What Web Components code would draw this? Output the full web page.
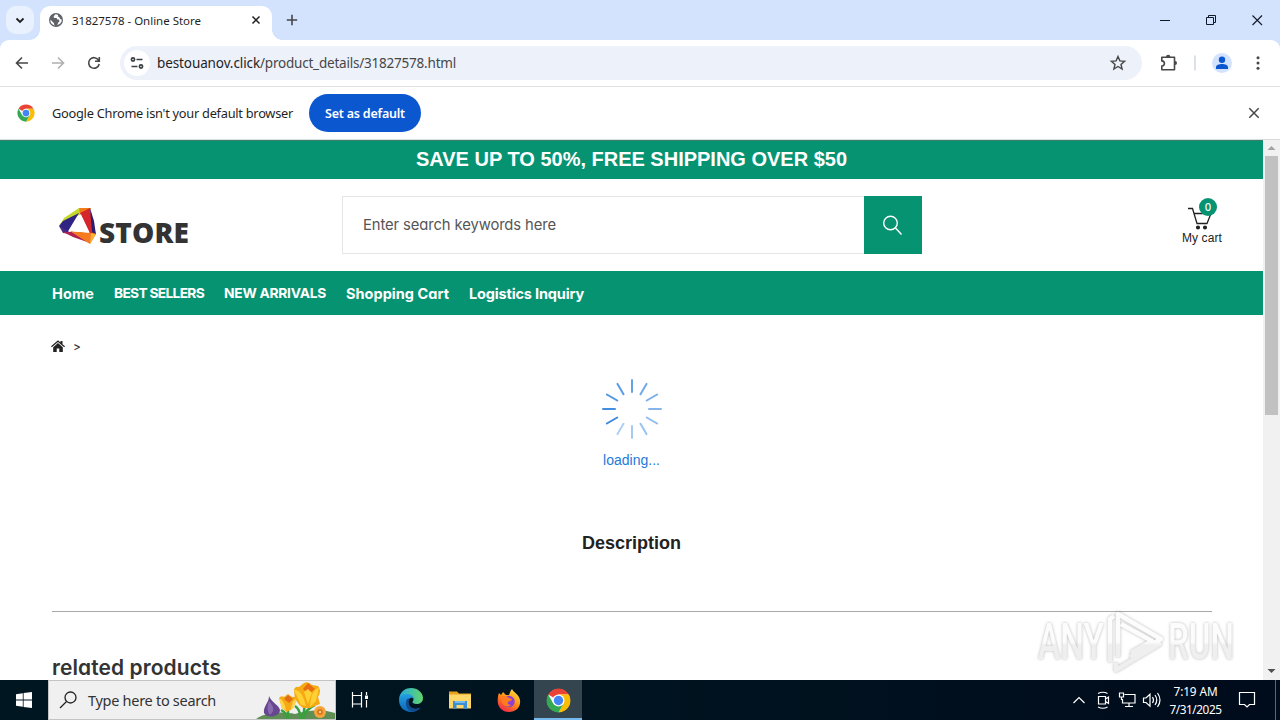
<!DOCTYPE html>
<html lang="en">
<head>
<meta charset="utf-8">
<title>31827578 - Online Store</title>
<style>
    body{
        margin: 0;
        width: 1280px;
        height: 720px;
        overflow: hidden;
        display: flex;
        flex-direction: column;
        background: #fff;
        font-family: "Noto Sans", "Open Sans", sans-serif;
    }
    main{
        display: flex;
        height: 541px;
        overflow: hidden;
    }
</style>
</head>
<body>
    <chrome-tabs><ui-text w="129">31827578 - Online Store</ui-text></chrome-tabs>
    <chrome-toolbar>
        <ui-text w="103" slot="host">bestouanov.click</ui-text>
        <ui-text w="196" slot="path">/product_details/31827578.html</ui-text>
    </chrome-toolbar>
    <chrome-infobar>
        <ui-text w="241">Google Chrome isn't your default browser</ui-text>
        <ui-text w="80" slot="action">Set as default</ui-text>
    </chrome-infobar>
    <main>
        <store-page></store-page>
        <scroll-bar></scroll-bar>
    </main>
    <win-taskbar></win-taskbar>
    <any-run></any-run>

<script>
    class Base extends HTMLElement {
        constructor(){
            super()
            this.attachShadow({ mode: 'open' }).innerHTML = this.constructor.html
        }
    }

    class ChromeTabs extends Base {
        static html = `
        <style>
            :host{
                display: flex;
                height: 40px;
                background: #d3e3fd;
                font-size: 11.5px;
                color: #1f1f1f;
            }
            svg{ display: block; }
            #search{
                width: 28px;
                height: 28px;
                margin: 6px 6px 0;
                border-radius: 10px;
                background: #e9f1fe;
            }
            #tab{
                display: flex;
                align-items: center;
                position: relative;
                box-sizing: border-box;
                width: 232px;
                height: 34px;
                margin-top: 6px;
                padding: 0 8px;
                padding-bottom: 6px;
                border-radius: 10px 10px 0 0;
                background: #fff;
            }
            #tab::before, #tab::after{
                content: "";
                position: absolute;
                bottom: 0;
                width: 10px;
                height: 10px;
            }
            #tab::before{
                left: -10px;
                background: radial-gradient(circle at 0 0, transparent 9.5px, #fff 10px);
            }
            #tab::after{
                right: -10px;
                background: radial-gradient(circle at 100% 0, transparent 9.5px, #fff 10px);
            }
            #title{ margin-left: 8px; flex: 1; }
            #plus{ margin: 10px 0 0 10px; }
            #space{ flex: 1; }
        </style>
        <div id="search">
            <svg width="28" height="28" fill="none" stroke="#1f1f1f" stroke-width="1.8"><path d="M10.5 12.5l3.5 3.5 3.5-3.5"/></svg>
        </div>
        <div id="tab">
            <svg width="16" height="16" viewBox="0 0 16 16">
                <circle cx="8" cy="8" r="7" fill="#5f6368"/>
                <path fill="#fff" d="M2.3 7.6L6 11.3v1.2l1.2 1.2A6 6 0 0 1 2.3 7.6zM8 2.2c-1.4.2-1.8 1-1.6 1.6l-1 1.2 1 .9h2.2l.8 1.5 1.5.2.6 1.6-1.2 1.2-1.1 2.6c3-.6 4.7-3 4.6-5.2l-1.8-1-.8-1.7-1.4-.5.3-1.6z"/>
            </svg>
            <div id="title"><slot></slot></div>
            <svg width="16" height="16" stroke="#1f1f1f" stroke-width="1.5"><path d="M4.5 4.500l7 7M11.500 4.500l-7 7"/></svg>
        </div>
        <svg id="plus" width="20" height="20" stroke="#444746" stroke-width="1.6"><path d="M10 4.8v10.4M4.8 10h10.4"/></svg>
        <div id="space"></div>
        <svg width="138" height="40" fill="none" stroke="#111827" stroke-width="1">
            <path d="M18 20.5h10"/>
            <path d="M64.500 17.500h7v7h-7zM66.500 17.500v-2h7v7h-2"/>
            <path d="M110.500 15.500l9.500 9.500M120 15.500l-9.500 9.500" stroke-width="1.1"/>
        </svg>`
    }

    class ChromeToolbar extends Base {
        static html = `
        <style>
            :host{
                display: block;
                height: 47px;
                background: #d3e3fd;
                font-size: 13.5px;
            }
            #bar{
                display: flex;
                align-items: center;
                box-sizing: border-box;
                height: 47px;
                border-radius: 9px 9px 0 0;
                border-bottom: 1px solid #dfe1e5;
                background: #fff;
            }
            svg{ display: block; flex: none; }
            #omnibox{
                display: flex;
                align-items: center;
                box-sizing: border-box;
                width: 1022px;
                height: 34px;
                padding: 0 12px 0 4px;
                border-radius: 17px;
                background: #edf1fa;
            }
            #site{
                width: 26px;
                height: 26px;
                margin-right: 7px;
                border-radius: 13px;
                background: #fff;
            }
            [name=host]{ color: #1f1f1f; }
            #path{ flex: 1; color: #474747; }
        </style>
        <div id="bar">
            <svg width="120" height="46" fill="none" stroke="#474747" stroke-width="1.6">
                <path d="M28 23H17M22 17.500L16.500 23l5.500 5.500"/>
                <path stroke="#b0b0b0" d="M52 23h11M58 17.500l5.500 5.500-5.500 5.500"/>
                <path d="M98.600 20.300A5.300 5.300 0 1 0 99.200 24M99.300 17v4.200h-4.300"/>
            </svg>
            <div id="omnibox">
                <div id="site">
                    <svg width="26" height="26" fill="none" stroke="#3c4043" stroke-width="1.7">
                        <circle cx="9" cy="9.500" r="1.600"/><path d="M12.500 9.500h6M7.500 16.500h6"/><circle cx="17" cy="16.500" r="1.600"/>
                    </svg>
                </div>
                <slot name="host"></slot><div id="path"><slot name="path"></slot></div>
                <svg width="24" height="24" fill="none" stroke="#474747" stroke-width="1.4"><path d="M12 5.500l1.900 4.400 4.700.4-3.600 3.100 1.100 4.600-4.100-2.500-4.100 2.500L9 13.400l-3.600-3.100 4.700-.4z"/></svg>
            </div>
            <svg width="138" height="46" fill="none" stroke="#474747" stroke-width="1.6">
                <path stroke-linejoin="round" d="M19.800 17.300h12.700v12.400H19.800v-3.600c3.500-.4 3.500-4.800 0-5.200z"/>
                <path fill="#474747" stroke="none" d="M24 17a2.200 2.200 0 0 1 4.400 0zM33 21a2 2 0 0 1 0 4z"/>
                <path stroke="#d5dae3" d="M53 15.500v15"/>
                <circle cx="80" cy="23" r="10" fill="#d3e3fd" stroke="none"/>
                <path fill="#0b57d0" stroke="none" d="M80 16.500a3.200 3.200 0 1 1 0 6.400 3.200 3.200 0 0 1 0-6.400zM74 29v-1.800c0-2.100 3-3.200 6-3.200s6 1.100 6 3.200V29z"/>
                <g fill="#474747" stroke="none"><circle cx="116" cy="17.700" r="1.500"/><circle cx="116" cy="23" r="1.500"/><circle cx="116" cy="28.300" r="1.500"/></g>
            </svg>
        </div>`
    }

    class ChromeInfobar extends Base {
        static html = `
        <style>
            :host{
                display: flex;
                align-items: center;
                box-sizing: border-box;
                height: 52px;
                padding: 0 18px 0 17px;
                background: #fff;
                font-size: 12.800px;
                color: #1f1f1f;
            }
            #logo{ margin-right: 17px; }
            button{
                width: 112px;
                height: 38px;
                margin: 0 auto 0 16px;
                padding: 0;
                border: 0;
                border-radius: 19px;
                background: #0b57d0;
                color: #fff;
                font: 600 12.500px "Noto Sans", sans-serif;
            }
        </style>
        <chrome-logo id="logo" style="--size: 18px"></chrome-logo>
        <slot></slot>
        <button><slot name="action"></slot></button>
        <svg width="16" height="16" stroke="#474747" stroke-width="1.500"><path d="M3.300 3.300l9.400 9.400M12.700 3.300l-9.400 9.400"/></svg>`
    }

    class ChromeLogo extends Base {
        static html = `
        <style>
            :host{ display: block; width: var(--size); height: var(--size); }
            svg{ display: block; }
        </style>
        <svg width="100%" height="100%" viewBox="0 0 48 48">
            <circle cx="24" cy="24" r="22" fill="#fff"/>
            <path fill="#ea4335" d="M24 24L4.100 12.500A23 23 0 0 1 43.900 12.500H24z"/>
            <path fill="#fbbc04" d="M24 12.500h19.900A23 23 0 0 1 24 47l10-17.200z"/>
            <path fill="#34a853" d="M4.100 12.500A23 23 0 0 0 24 47l10-17.300-20 0z"/>
            <circle cx="24" cy="24" r="11.500" fill="#fff"/>
            <circle cx="24" cy="24" r="9" fill="#4285f4"/>
        </svg>`
    }

    class StorePage extends Base {
        static html = `
        <style>
            :host{
                display: block;
                width: 1263px;
                height: 541px;
                overflow: hidden;
                background: #fff;
                font-family: Inter, "Open Sans", sans-serif;
                font-feature-settings: "cv11";
            }
            svg{ display: block; }
            #banner{
                display: flex;
                justify-content: center;
                align-items: center;
                box-sizing: border-box;
                height: 40px;
                border-top: 1px solid #d5dedb;
                background: #069372;
                box-shadow: inset 0 1px #3d7f6d;
                color: #fff;
                font: bold 20px "Liberation Sans", Arial, sans-serif;
            }
            header{
                display: flex;
                align-items: center;
                height: 92px;
                padding: 0 41px 0 52px;
            }
            #logo{
                display: flex;
                width: 290px;
                padding-top: 7px;
                color: #333;
                font: 800 28px/36px "Open Sans", sans-serif;
            }
            #logo svg{ margin: 0 2px 0 6px; }
            #logo ui-text{ padding-top: 7px; }
            #search{
                display: flex;
                width: 580px;
                height: 58px;
            }
            #field{
                flex: 1;
                display: flex;
                align-items: center;
                padding: 0 0 1px 20px;
                border: 1px solid #e5e5e5;
                border-right: 0;
                color: #555;
                font-size: 14.800px;
            }
            #go{ width: 58px; background: #069372; }
            #cart{
                position: relative;
                margin-left: auto;
                width: 40px;
                color: #222;
                font: 12px/14px "Liberation Sans", Arial, sans-serif;
            }
            #count{
                position: absolute;
                left: 17px;
                top: -7px;
                width: 18px;
                height: 18px;
                border-radius: 9px;
                background: #069372;
                color: #fff;
                text-align: center;
                font: 500 10px/18px Inter, sans-serif;
            }
            nav{
                display: flex;
                align-items: center;
                gap: 20px;
                height: 44px;
                padding-left: 52px;
                background: #069372;
                color: #fff;
                font-size: 14.500px;
                font-weight: 650;
            }
            .caps{ font-size: 13.800px; }
            #crumb{
                display: flex;
                align-items: center;
                gap: 8px;
                height: 62px;
                padding-left: 51px;
                color: #222;
                font-size: 12px;
            }
            #loading{
                display: flex;
                flex-direction: column;
                align-items: center;
                gap: 10px;
                height: 156px;
                color: #1d7ad9;
                font: 14px/18px "Liberation Sans", Arial, sans-serif;
            }
            h3{
                display: flex;
                justify-content: center;
                margin: 0 52px 0 52px;
                padding-right: 1px;
                width: 1159px;
                height: 78px;
                border-bottom: 1px solid #aaa;
                color: #222;
                font: bold 18px/20px "Liberation Sans", Arial, sans-serif;
            }
            h2{
                margin: 43px 0 0 52px;
                color: #333;
                font-size: 21px;
                line-height: 26px;
                font-weight: 600;
            }
        </style>
        <div id="banner"><ui-text w="431">SAVE UP TO 50%, FREE SHIPPING OVER $50</ui-text></div>
        <header>
            <div id="logo">
                <svg width="39" height="38" viewBox="0 0 39 38">
                    <path fill="#c5d92d" d="M21 1L6 11 1 19 23 7z"/>
                    <path fill="#2f2483" d="M1 19l4-5L21 6 9 26z"/>
                    <path fill="#4b2a83" d="M1 19l4 7 10 1z"/>
                    <path fill="#f07d1a" d="M21 1h12l-2 4-9 2z"/>
                    <path fill="#d4262b" d="M32 1l2 12 4 15-6-1-10-21z"/>
                    <path fill="#2b1e6e" d="M32 1l4 13 2 14-4-3z"/>
                    <path fill="#b02050" d="M5 25l10 5 17 6-18-11z"/>
                    <path fill="#f47b20" d="M12 24l22 2 4 1-6 10z"/>
                    <path fill="#fbb034" d="M33 26l5 1-6 10z"/>
                    <path fill="#fff" d="M23 7.500l8.500 18-17-1z"/>
                </svg>
                <ui-text w="90">STORE</ui-text>
            </div>
            <div id="search">
                <div id="field"><ui-text w="193">Enter search keywords here</ui-text></div>
                <div id="go"><svg width="58" height="58" fill="none" stroke="#fff" stroke-width="1.400"><circle cx="26.500" cy="27" r="6.800"/><path d="M31.500 32l6 6.500"/></svg></div>
            </div>
            <div id="cart">
                <svg width="40" height="26" fill="none" stroke="#222" stroke-width="1.300">
                    <path d="M6 3.500h4.500L15 18.500h10L29 8.500H12"/>
                    <circle cx="16" cy="22.500" r="1.400" fill="#222"/><circle cx="23" cy="22.500" r="1.400" fill="#222"/>
                </svg>
                <ui-text w="40">My cart</ui-text>
                <div id="count">0</div>
            </div>
        </header>
        <nav>
            <ui-text w="42">Home</ui-text>
            <ui-text w="90" class="caps">BEST SELLERS</ui-text>
            <ui-text w="102" class="caps">NEW ARRIVALS</ui-text>
            <ui-text w="103">Shopping Cart</ui-text>
            <ui-text w="115">Logistics Inquiry</ui-text>
        </nav>
        <div id="crumb">
            <svg width="14" height="12" viewBox="0 0 14 12" fill="#222"><path d="M0 6.300L7 .3l2.500 2.200V1h2v3.200L14 6.300l-.8.900L7 1.900.8 7.200zM2.200 7.200L7 3.100l4.800 4.100V12H8.300V8.500H5.700V12H2.200z"/></svg>
            <span>&gt;</span>
        </div>
        <div id="loading">
            <svg id="spin" width="64" height="64" stroke="#3a88e0" stroke-width="2" stroke-linecap="round"></svg>
            <ui-text w="57">loading...</ui-text>
        </div>
        <h3><ui-text w="99">Description</ui-text></h3>
        <h2><ui-text w="169">related products</ui-text></h2>`

        constructor(){
            super()
            const spin = this.shadowRoot.getElementById('spin')
            // twelve spokes, fading clockwise from eight o'clock
            let lines = ''
            for (let i = 0; i < 12; i++) {
                lines += `<path d="M32 3v12" opacity="${1 - i * 0.055}" transform="rotate(${240 + i * 30} 32 32)"/>`
            }
            spin.innerHTML = lines
        }
    }

    class ScrollBar extends Base {
        static html = `
        <style>
            :host{
                display: flex;
                flex-direction: column;
                box-sizing: border-box;
                width: 17px;
                height: 541px;
                border-top: 1px solid #d9d9d9;
                background: #f1f1f1;
            }
            svg{ display: block; }
            #thumb{
                width: 13px;
                height: 259px;
                margin: 0 2px auto;
                background: #c1c1c1;
            }
        </style>
        <svg width="17" height="16"><path fill="#a3a3a3" d="M4.500 10h8l-4-4z"/></svg>
        <div id="thumb"></div>
        <svg width="17" height="17"><path fill="#505050" d="M4.500 6h8l-4 4z"/></svg>`
    }

    class WinTaskbar extends Base {
        static html = `
        <style>
            :host{
                display: flex;
                height: 40px;
                background: linear-gradient(90deg, #001722, #00121f 60%, #000b1c);
                color: #fff;
                font-size: 12px;
            }
            svg{ display: block; flex: none; }
            #search{
                display: flex;
                align-items: center;
                box-sizing: border-box;
                width: 288px;
                height: 40px;
                border: 1px solid #c4c4c4;
                background: #f0f0f0;
                color: #333;
                font-size: 14.500px;
            }
            #flowers{ margin-left: auto; }
            .app{
                display: flex;
                justify-content: center;
                align-items: center;
                width: 49px;
                height: 40px;
            }
            .on{
                box-sizing: border-box;
                width: 48px;
                margin-left: 1px;
                border-bottom: 2px solid #76b9ed;
                background: #34454f;
            }
            #tray{ margin-left: auto; }
            #clock{
                display: flex;
                flex-direction: column;
                align-items: center;
                justify-content: center;
                width: 55px;
                line-height: 18px;
                font-size: 11.800px;
            }
        </style>
        <svg width="48" height="40" fill="#fff"><path d="M16 14.200l6.800-1v6.400H16zM23.600 13.100l8.400-1.200v7.700h-8.400zM16 20.400h6.800v6.400l-6.800-1zM23.600 20.400H32v7.700l-8.400-1.200z"/></svg>
        <div id="search">
            <svg width="39" height="38" fill="none" stroke="#222" stroke-width="1.300"><circle cx="21.500" cy="16.500" r="5.500"/><path d="M17.500 20.500L11 27"/></svg>
            <ui-text w="128">Type here to search</ui-text>
            <svg id="flowers" width="82" height="38" viewBox="0 0 82 38">
                <path fill="#5f8f55" d="M3 38c12-8 28-7 39-5 12-4 28-5 40-1v6z"/>
                <path fill="none" stroke="#38a03c" stroke-width="2.500" d="M35 27v11M28 29q6 3 7 9M48 38q-1-10-6-13M51 38q1-10 11-14M52 22l-2 16"/>
                <path fill="#66478f" d="M16 15c2 6 10 9 11 14 0 7-13 9-16 3-1-7 5-10 5-17z"/>
                <path fill="#8a69ae" d="M16 20c-2 6-2 10 1 14 4-4 5-7-1-14z"/>
                <path fill="#f5a915" d="M26 17q2-3 5-1l4-3 4 3q5-1 5 1-2 7-5 11l-5 3-5-4z"/>
                <path fill="#e46e14" d="M31 18l4-4 5 4-4 4z"/>
                <path fill="#ffd34a" d="M26 17q5 2 7 12l-4-2zM44 17q-5 1-6 12l3-3z"/>
                <path fill="#f5a915" d="M41 9q1-4 5-3l5-4q4-2 8 2l6 1q4 5 0 11l2 7-10 4h-7q-9-6-9-18z"/>
                <path fill="#e96e13" d="M50 8l5-6 7 6-6 5z"/>
                <path fill="#ffd032" d="M41 9q8-1 12 16l-5-1zM66 7q-8 1-9 19l6-6zM51 11l4-3 4 4-4 11z"/>
                <circle cx="67" cy="31" r="6" fill="#f5a63a"/><circle cx="67" cy="31" r="3" fill="#db7621"/>
                <circle cx="67" cy="31" r="1" fill="#fff0a0"/>
            </svg>
        </div>
        <svg width="50" height="40" fill="none" stroke="#fff" stroke-width="1.200">
            <path d="M16.500 12v3.500h9V12M16.500 27.500V24h9v3.500M16.500 15.500h9v8.500h-9zM30.500 12v3M30.500 20v7.500"/><path fill="#fff" stroke="none" d="M29 15.500h3V19h-3z"/>
        </svg>
        <div class="app">
            <svg width="26" height="26" viewBox="0 0 26 26">
                <defs>
                    <linearGradient id="ea" x1="0" x2="1"><stop offset="0" stop-color="#25a9e0"/><stop offset="1" stop-color="#62d66b"/></linearGradient>
                    <linearGradient id="eb" x1="0" x2="0" y1="0" y2="1"><stop offset="0" stop-color="#24a0e2"/><stop offset="1" stop-color="#0b65b5"/></linearGradient>
                </defs>
                <path fill="url(#ea)" d="M1 12C2 4 8 1 13 1c7 0 12 5 12 10 0 4-3 6-6.500 6-3 0-4-1.200-4-2 0-.7 1-1 1-3 0-2-2-4-6-4S2 10 1 12z"/>
                <path fill="url(#eb)" d="M1 13c0-3 3-6 8-6 4 0 6.500 2.500 6.500 4.500-3-2-6 1-5 5s5 7 11.500 4.500C20 23 17 25 13 25 6 25 1 20 1 13z"/>
                <path fill="#124b8b" d="M8.500 13c-2 5 1 11 6.500 11.800 3-.3 6-2 7.500-4.200-6 2.500-12 .5-12-5 0-2 .5-3.500 2-4.400-2 .1-3.500.6-4 1.800z"/>
            </svg>
        </div>
        <div class="app">
            <svg width="22" height="20" viewBox="0 0 22 20">
                <path fill="#e8a21c" d="M0 1.500h8l2 2h12v4H0z"/><path fill="#ffd769" d="M0 4.500h22v14H0z"/>
                <path fill="#3c8fd4" d="M4 11h14v8h-3.500v-4h-7v4H4z"/><path fill="#75bdf0" d="M6 11h10v2H6z"/>
            </svg>
        </div>
        <div class="app">
            <svg width="24" height="25" viewBox="0 0 24 25">
                <defs><linearGradient id="ff" x1=".8" x2=".2" y1="0" y2="1"><stop offset="0" stop-color="#ffe33d"/><stop offset=".5" stop-color="#ff8a16"/><stop offset="1" stop-color="#f0204f"/></linearGradient></defs>
                <path fill="url(#ff)" d="M2 5l2 2 2-3 3 3h3c1-3 2-5 3-6 1 3 7 5 8 11 1 7-4 12-11 12S.7 19 .7 13C.700 10 1 7 2 5z"/>
                <circle cx="12" cy="13.500" r="5.700" fill="#8d3fd0"/>
                <path fill="#ff7b20" d="M4 9c3-2 6-1 8 1l3 1c0 2-3 2-4 3-1 2 1 3 3 3-3 3-8 1-9-3z"/>
            </svg>
        </div>
        <div class="app on"><chrome-logo style="--size: 25px; margin-top: 2px"></chrome-logo></div>
        <svg id="tray" width="98" height="40" fill="none" stroke="#fff" stroke-width="1.200">
            <path d="M3.500 23l5.500-5.500 5.500 5.500"/>
            <path d="M28.500 16.500h7v7.500h-7zM35.500 19l3-2v6.500l-3-2M28 13.500q5-2.500 9.500 0M28 27q5 2.500 9.500 0"/>
            <path d="M54.500 14.500h10.500v8.500H52.500v-4M49.500 13h4v4h-4zM51.500 17v3M59 23v3.500M55 26.500h8"/>
            <path d="M73.500 18h2.500l4-3.800v12L76 22.500h-2.500zM82.500 17q2 3 0 6M85 15q3.500 5 0 10M87.500 13q5 7 0 14"/>
        </svg>
        <div id="clock"><ui-text w="44">7:19 AM</ui-text><ui-text w="52">7/31/2025</ui-text></div>
        <svg width="57" height="40" fill="none" stroke="#fff" stroke-width="1.200"><path d="M16.500 12.500h15v12h-5l-2.500 2.500-2.500-2.500h-5z"/><path stroke="#5d6876" stroke-width="1" d="M52.500 0v40"/></svg>`
    }

    class AnyRun extends Base {
        static html = `
        <style>
            /* floats over the page and its scroll area */
            :host{
                position: absolute;
                left: 1030px;
                top: 602px;
                pointer-events: none;
            }
            svg{ display: block; filter: drop-shadow(0 0 1.500px rgba(0, 0, 0, .28)); }
            text{ font: 500 50px Roboto, sans-serif; }
        </style>
        <svg width="249" height="76" fill="url(#fade)">
            <defs>
                <linearGradient id="fade" gradientUnits="userSpaceOnUse" x1="0" x2="0" y1="8" y2="72">
                    <stop offset=".5" stop-color="#fcfcfc"/><stop offset=".55" stop-color="#efefef"/>
                </linearGradient>
            </defs>
            <text x="8" y="57" textLength="66" lengthAdjust="spacingAndGlyphs">ANY</text>
            <text x="138" y="57" textLength="66" lengthAdjust="spacingAndGlyphs">RUN</text>
            <g fill="none" stroke="url(#fade)" stroke-width="4.500" stroke-linejoin="round">
                <path d="M80 60V17l4-3M88 55V12l43 25-31 18M91 22l31 17-21 12M86 61v7l45-27"/>
            </g>
        </svg>`
    }

    // one line of text, tracked so that it fills w pixels
    class UiText extends Base {
        static html = `
        <style>
            :host{ display: inline-block; white-space: nowrap; }
        </style>
        <slot></slot>`

        connectedCallback(){
            const width = Number(this.getAttribute('w'))
            const now = this.getBoundingClientRect().width
            if (width && now) {
                this.style.letterSpacing = (width - now) / this.textContent.length + 'px'
            }
        }
    }

    customElements.define('chrome-logo', ChromeLogo)
    customElements.define('chrome-tabs', ChromeTabs)
    customElements.define('chrome-toolbar', ChromeToolbar)
    customElements.define('chrome-infobar', ChromeInfobar)
    customElements.define('store-page', StorePage)
    customElements.define('scroll-bar', ScrollBar)
    customElements.define('win-taskbar', WinTaskbar)
    customElements.define('any-run', AnyRun)
    customElements.define('ui-text', UiText)
</script>
</body>
</html>
